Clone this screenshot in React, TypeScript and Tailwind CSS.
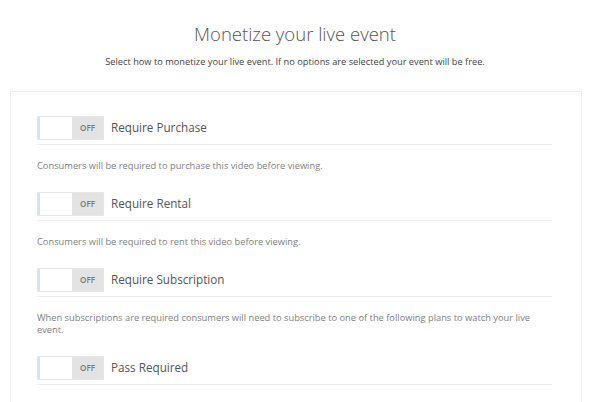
import type { ReactElement } from "react";

const options = [
  {
    label: "Require Purchase",
    desc: "Consumers will be required to purchase this video before viewing.",
  },
  {
    label: "Require Rental",
    desc: "Consumers will be required to rent this video before viewing.",
  },
  {
    label: "Require Subscription",
    desc: "When subscriptions are required consumers will need to subscribe to one of the following plans to watch your live event.",
  },
  { label: "Pass Required", desc: "" },
];

function OffToggle(): ReactElement {
  return (
    <div className="flex h-[24px] w-[67px] shrink-0 border border-[#e6e6e6]">
      <span className="w-[34px] border-l-2 border-[#cfe3f3] bg-white" />
      <span className="flex flex-1 items-center justify-center bg-[#e3e3e3] text-[8px] font-semibold text-[#777]">
        OFF
      </span>
    </div>
  );
}

function OptionRow({ label, desc }: { label: string; desc: string }): ReactElement {
  return (
    <div className="flex flex-col">
      <div className="flex items-center gap-[7px] border-b border-[#eeeeee] pb-[4px]">
        <OffToggle />
        <span className="text-[11.7px] text-[#555]">{label}</span>
      </div>
      {desc && (
        <p className="mt-[15px] mb-[20px] text-[9.3px] leading-[12px] text-[#808080]">{desc}</p>
      )}
    </div>
  );
}

export default function App(): ReactElement {
  return (
    <div
      className="flex h-[402px] w-[590px] flex-col overflow-hidden bg-white"
      style={{ fontFamily: '"Open Sans", "Liberation Sans", sans-serif' }}
    >
      <div className="mx-auto mt-[10px] h-px w-[40px] bg-[#f4f4f4]" />
      <h1 className="mt-[10px] text-center text-[18.5px] font-light text-[#555]">Monetize your live event</h1>
      <p className="mt-[7px] text-center text-[9.25px] text-[#444]">
        Select how to monetize your live event. If no options are selected your event will be free.
      </p>
      <div className="ml-[10px] mr-[8px] mt-[22px] min-h-[340px] shrink-0 border border-[#eeeeee] pl-[26px] pr-[29px] pt-[24px]">
        {options.map((o) => (
          <OptionRow key={o.label} label={o.label} desc={o.desc} />
        ))}
      </div>
    </div>
  );
}
